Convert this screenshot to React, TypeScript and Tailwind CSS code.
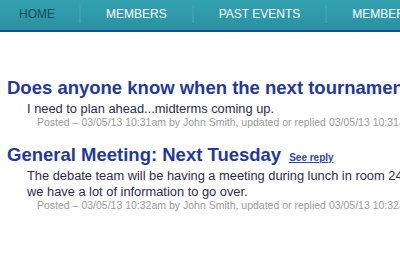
import React from 'react';

const navItems = ['HOME', 'MEMBERS', 'PAST EVENTS', 'MEMBER LOGIN'];

const posts = [
  {
    title: 'Does anyone know when the next tournament is?',
    body: ['I need to plan ahead...midterms coming up.'],
    posted: '03/05/13 10:31am',
    updated: '03/05/13 10:31am',
    reply: false,
  },
  {
    title: 'General Meeting: Next Tuesday',
    body: [
      'The debate team will be having a meeting during lunch in room 24',
      'we have a lot of information to go over.',
    ],
    posted: '03/05/13 10:32am',
    updated: '03/05/13 10:32am',
    reply: true,
  },
];

export default function App() {
  return (
    <div className="w-[400px] h-[266px] overflow-hidden bg-white font-['Liberation_Sans',Arial,sans-serif]">
      {/* Nav */}
      <nav className="w-[640px] h-[32px] flex items-center pl-[19px] bg-gradient-to-b from-[#33a0b0] via-[#2f9aab] to-[#2a909f] border-b-2 border-[#1b4c9c]">
        {navItems.map((item, i) => (
          <React.Fragment key={item}>
            {i > 0 && (
              <span className="w-[2px] h-[18px] mt-[-2px] bg-gradient-to-r from-[#2a8a98] via-[#57b7c3] to-[#2a8a98]" />
            )}
            <span
              className={`text-[12px] leading-[14px] whitespace-nowrap ${
                i === 0 ? 'pr-[24px] text-[#1d4a56]' : 'px-[25px] text-white'
              } mt-[-2px]`}
            >
              {item}
            </span>
          </React.Fragment>
        ))}
      </nav>

      {/* Posts */}
      <div className="w-[640px] pl-[7px] pt-[44px]">
        {posts.map((p, i) => (
          <div key={p.title} className={i > 0 ? 'mt-[15px]' : ''}>
            <div className="flex items-baseline whitespace-nowrap">
              <h2 className="text-[18.5px] leading-[24px] font-bold text-[#1f3a9b]">{p.title}</h2>
              {p.reply && (
                <a className="ml-[8px] text-[10px] font-bold text-[#2a46a8] underline">See reply</a>
              )}
            </div>
            <p className="mt-[1px] pl-[20px] text-[12.85px] leading-[16px] text-[#2e2a55] whitespace-nowrap">
              {p.body.map((line, j) => (
                <React.Fragment key={j}>
                  {j > 0 && <br />}
                  {line}
                </React.Fragment>
              ))}
            </p>
            <p className="pl-[30px] text-[10.5px] leading-[11px] text-[#9a9a9a] whitespace-nowrap">
              Posted – {p.posted} by John Smith, updated or replied {p.updated}
            </p>
          </div>
        ))}
      </div>
    </div>
  );
}
